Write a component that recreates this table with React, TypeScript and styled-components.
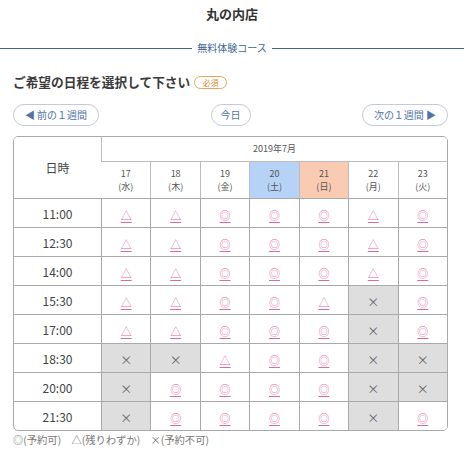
import React from "react";
import styled, { createGlobalStyle } from "styled-components";

const Global = createGlobalStyle`
  html, body { margin: 0; padding: 0; background: #fff; }
  body { font-family: "Noto Sans CJK JP", "Noto Sans", sans-serif; color: #333; }
`;

const Page = styled.div`
  width: 464px;
  display: flex;
  flex-direction: column;
`;

const ShopTitle = styled.h1`
  margin: 4px 0 0;
  height: 20px;
  font-size: 13px;
  line-height: 20px;
  font-weight: 700;
  text-align: center;
  color: #333;
`;

const CourseBar = styled.div`
  margin-top: 16px;
  display: flex;
  align-items: center;
  gap: 5px;
  height: 16px;
  &::before, &::after {
    content: "";
    flex: 1;
    height: 1px;
    background: #3d6594;
  }
`;

const CourseLabel = styled.span`
  font-size: 10px;
  line-height: 16px;
  color: #3d6594;
`;

const Content = styled.div`
  padding: 0 16px 0 13px;
  display: flex;
  flex-direction: column;
`;

const Heading = styled.div`
  margin-top: 17px;
  display: flex;
  align-items: center;
  gap: 4px;
  height: 18px;
`;

const HeadingText = styled.h2`
  margin: 0;
  font-size: 12.7px;
  line-height: 18px;
  font-weight: 700;
  color: #3a3a3a;
`;

const Badge = styled.span`
  width: 31px;
  height: 11px;
  font-size: 8px;
  line-height: 11px;
  text-align: center;
  border: 1px solid #e8a65a;
  border-radius: 7px;
  color: #e08a30;
`;

const NavRow = styled.div`
  margin-top: 13px;
  display: flex;
  justify-content: space-between;
  align-items: center;
`;

const NavButton = styled.button<{ $w: number }>`
  width: ${(p) => p.$w}px;
  height: 22px;
  padding: 0;
  border: 1px solid #c4cad6;
  border-radius: 11px;
  background: #fff;
  color: #4f74a8;
  font-family: inherit;
  font-size: 10px;
  line-height: 20px;
  text-align: center;
  white-space: nowrap;
`;

const Table = styled.table`
  margin-top: 10px;
  width: 435px;
  border-collapse: separate;
  border-spacing: 0;
  border: 1px solid #a9a9a9;
  border-radius: 5px;
  table-layout: fixed;
  overflow: hidden;
`;

const Th = styled.th<{ $bg?: string; $h: number }>`
  height: ${(p) => p.$h}px;
  padding: 0;
  font-weight: 400;
  color: #555;
  border-left: 1px solid #bdbdbd;
  border-top: 1px solid #bdbdbd;
  background: ${(p) => p.$bg || "#fff"};
  text-align: center;
  vertical-align: middle;
  tr:first-child > & { border-top: none; }
  &:first-child { border-left: none; }
`;

const MonthTh = styled(Th)`
  font-size: 9px;
  line-height: 12px;
`;

const DayTh = styled(Th)`
  font-size: 9px;
  line-height: 13px;
`;

const CornerTh = styled(Th)`
  font-size: 12px;
  color: #444;
  border-left: none;
`;

const TimeTd = styled.td`
  height: 28px;
  padding: 0;
  font-size: 12px;
  color: #444;
  text-align: center;
  border-top: 1px solid #a9a9a9;
`;

const Cell = styled.td<{ $off: boolean }>`
  height: 28px;
  padding: 0;
  text-align: center;
  border-top: 1px solid #a9a9a9;
  border-left: 1px solid #a9a9a9;
  background: ${(p) => (p.$off ? "#dedede" : "#fff")};
`;

const Mark = styled.a`
  font-size: 11px;
  color: #e0689f;
  text-decoration: underline;
  text-underline-offset: 2px;
  text-decoration-thickness: 1px;
`;

const Cross = styled.span`
  font-size: 12px;
  color: #666;
`;

const Legend = styled.div`
  margin-top: 2px;
  font-size: 10.3px;
  line-height: 14px;
  color: #777;
`;

const days = [
  { d: "17", w: "水" },
  { d: "18", w: "木" },
  { d: "19", w: "金" },
  { d: "20", w: "土", bg: "#b6d3f7" },
  { d: "21", w: "日", bg: "#f8cbb2" },
  { d: "22", w: "月" },
  { d: "23", w: "火" },
];

const rows: [string, string][] = [
  ["11:00", "△△◎◎◎△◎"],
  ["12:30", "△△◎◎◎△◎"],
  ["14:00", "△△◎◎◎△◎"],
  ["15:30", "△△◎◎△×◎"],
  ["17:00", "△△◎◎◎×◎"],
  ["18:30", "××△◎◎××"],
  ["20:00", "×◎◎◎◎××"],
  ["21:30", "×◎◎◎◎×◎"],
];

export default function App() {
  return (
    <Page>
      <Global />
      <ShopTitle>丸の内店</ShopTitle>
      <CourseBar>
        <CourseLabel>無料体験コース</CourseLabel>
      </CourseBar>
      <Content>
        <Heading>
          <HeadingText>ご希望の日程を選択して下さい</HeadingText>
          <Badge>必須</Badge>
        </Heading>
        <NavRow>
          <NavButton $w={86}>◀ 前の１週間</NavButton>
          <NavButton $w={40}>今日</NavButton>
          <NavButton $w={86}>次の１週間 ▶</NavButton>
        </NavRow>
        <Table>
          <colgroup>
            <col style={{ width: 87 }} />
            {days.map((d) => (
              <col key={d.d} />
            ))}
          </colgroup>
          <thead>
            <tr>
              <CornerTh $h={61} rowSpan={2}>日時</CornerTh>
              <MonthTh $h={24} colSpan={7}>2019年7月</MonthTh>
            </tr>
            <tr>
              {days.map((d) => (
                <DayTh key={d.d} $h={36} $bg={d.bg}>
                  {d.d}
                  <br />({d.w})
                </DayTh>
              ))}
            </tr>
          </thead>
          <tbody>
            {rows.map(([t, marks]) => (
              <tr key={t}>
                <TimeTd>{t}</TimeTd>
                {Array.from(marks).map((m, i) => (
                  <Cell key={i} $off={m === "×"}>
                    {m === "×" ? <Cross>×</Cross> : <Mark>{m}</Mark>}
                  </Cell>
                ))}
              </tr>
            ))}
          </tbody>
        </Table>
        <Legend>◎(予約可)　△(残りわずか)　×(予約不可)</Legend>
      </Content>
    </Page>
  );
}
